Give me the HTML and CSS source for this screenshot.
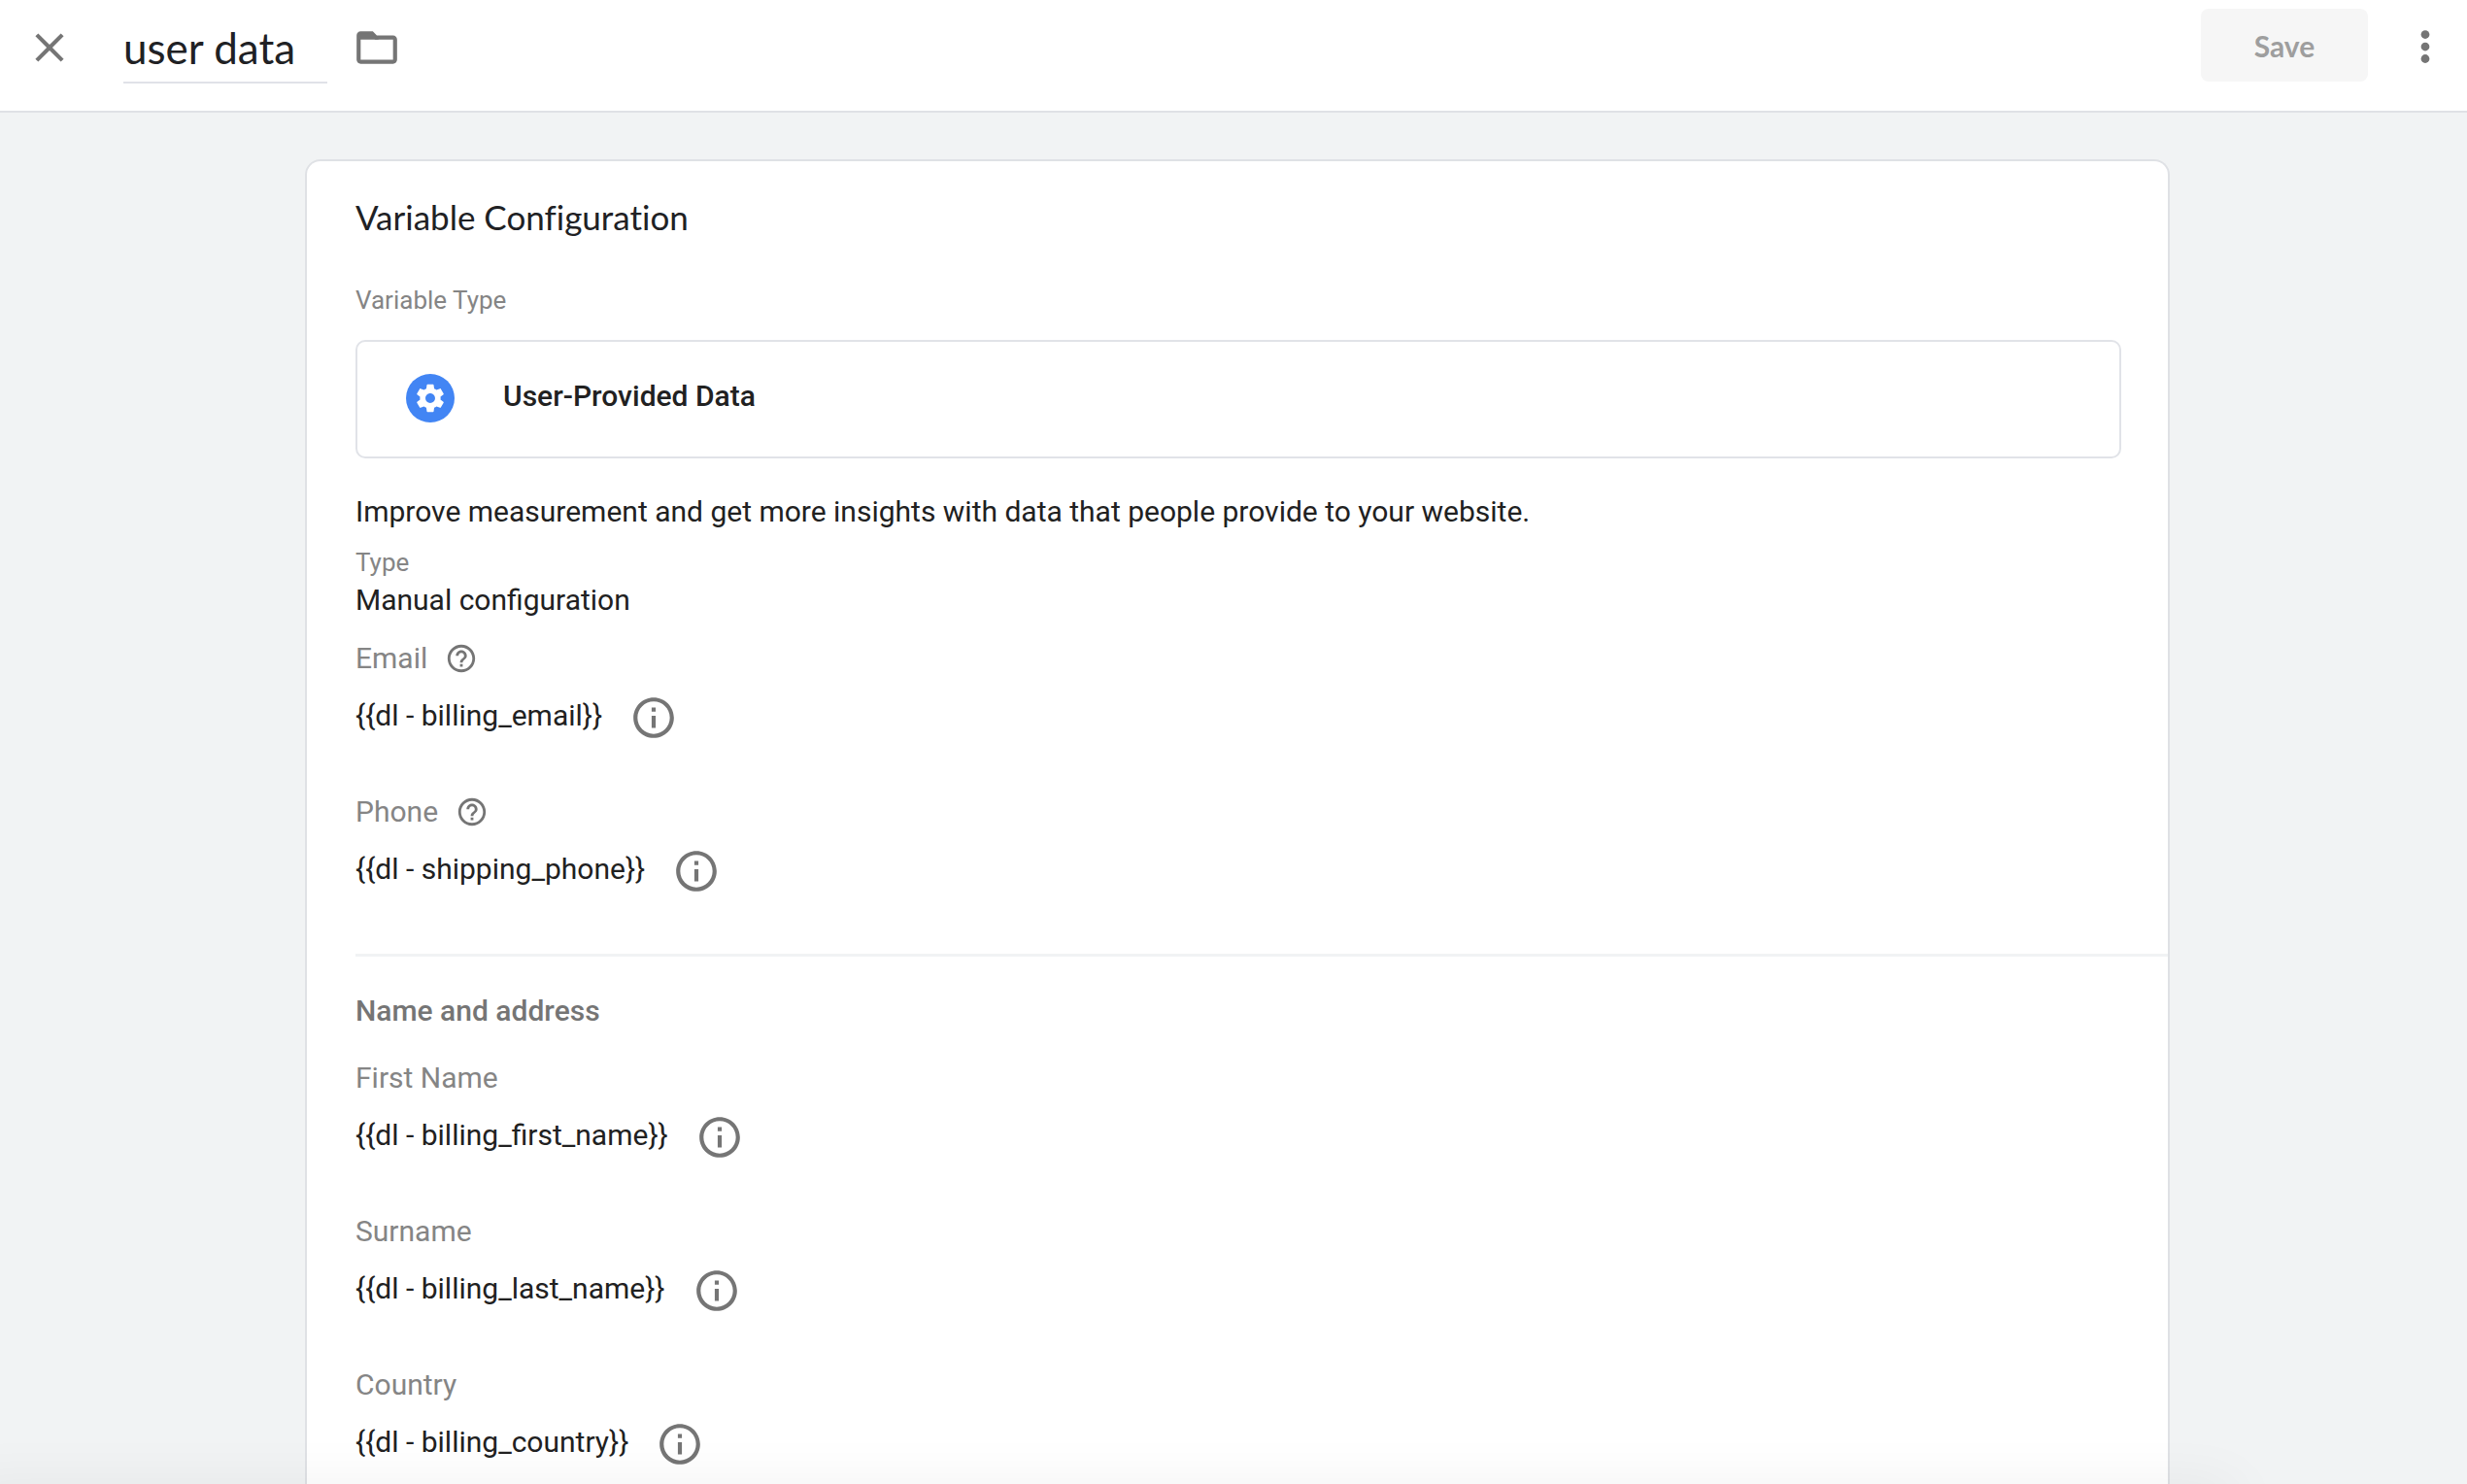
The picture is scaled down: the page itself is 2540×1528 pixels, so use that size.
FILE: index.html
```html
<!DOCTYPE html>
<html lang="en">
<head>
<meta charset="utf-8">
<meta name="viewport" content="width=device-width, initial-scale=1">
<title>user data</title>
<link rel="stylesheet" href="styles.css">
</head>
<body>
<svg class="sprite" aria-hidden="true">
  <symbol id="icon-info" viewBox="0 0 24 24"><path d="M11 7h2v2h-2V7zm0 4h2v6h-2v-6zm1-9C6.48 2 2 6.48 2 12s4.48 10 10 10 10-4.48 10-10S17.52 2 12 2zm0 18c-4.410 0-8-3.590-8-8s3.590-8 8-8 8 3.590 8 8-3.590 8-8 8z"/></symbol>
  <symbol id="icon-help" viewBox="0 0 24 24"><path d="M11 18h2v-2h-2v2zm1-16C6.480 2 2 6.480 2 12s4.480 10 10 10 10-4.480 10-10S17.520 2 12 2zm0 18c-4.410 0-8-3.590-8-8s3.590-8 8-8 8 3.590 8 8-3.590 8-8 8zm0-14c-2.210 0-4 1.790-4 4h2c0-1.100.9-2 2-2s2 .9 2 2c0 2-3 1.750-3 5h2c0-2.250 3-2.500 3-5 0-2.210-1.790-4-4-4z"/></symbol>
</svg>
<header class="topbar">
  <button class="icon-button" type="button" aria-label="Close">
    <svg class="icon" viewBox="0 0 24 24"><path d="M19 6.410 17.590 5 12 10.590 6.410 5 5 6.410 10.590 12 5 17.590 6.410 19 12 13.410 17.590 19 19 17.590 13.410 12z"/></svg>
  </button>
  <input class="title-input" type="text" value="user data" aria-label="Variable name">
  <button class="icon-button" type="button" aria-label="Move to folder">
    <svg class="icon" viewBox="0 0 24 24"><path d="M9.170 6l2 2H20v10H4V6h5.170M10 4H4c-1.100 0-1.990.9-1.990 2L2 18c0 1.100.9 2 2 2h16c1.100 0 2-.9 2-2V8c0-1.100-.9-2-2-2h-8l-2-2z"/><path d="M3 5h7l3 3H3z"/></svg>
  </button>
  <div class="topbar-actions">
    <button class="save-button" type="button" disabled>Save</button>
    <button class="icon-button" type="button" aria-label="More actions">
      <svg class="icon" viewBox="0 0 24 24"><circle cx="12" cy="6" r="2.100"/><circle cx="12" cy="12" r="2.100"/><circle cx="12" cy="18" r="2.100"/></svg>
    </button>
  </div>
</header>
<main class="page">
  <section class="card">
    <h1 class="card-title">Variable Configuration</h1>
    <h2 class="caption type-caption">Variable Type</h2>
    <div class="type-box">
      <span class="type-badge"><svg class="gear" viewBox="0 0 24 24"><path d="M19.430 12.980c.04-.32.07-.64.07-.98s-.03-.66-.07-.98l2.110-1.650c.19-.15.24-.42.12-.64l-2-3.460c-.12-.22-.39-.3-.61-.22l-2.490 1c-.52-.4-1.080-.73-1.690-.98l-.38-2.650C14.460 2.180 14.250 2 14 2h-4c-.25 0-.46.18-.49.42l-.38 2.650c-.61.25-1.170.59-1.690.98l-2.490-1c-.23-.09-.49 0-.61.22l-2 3.460c-.13.22-.07.49.12.64l2.110 1.650c-.04.32-.07.65-.07.98s.03.66.07.98l-2.110 1.650c-.19.15-.24.42-.12.64l2 3.460c.12.22.39.3.61.22l2.490-1c.52.4 1.080.73 1.690.98l.38 2.650c.03.24.24.42.49.42h4c.25 0 .46-.18.49-.42l.38-2.650c.61-.25 1.170-.59 1.690-.98l2.490 1c.23.09.49 0 .61-.22l2-3.460c.12-.22.07-.49-.12-.64l-2.110-1.650zM12 15.500c-1.930 0-3.500-1.570-3.500-3.500s1.570-3.500 3.500-3.500 3.500 1.570 3.500 3.500-1.570 3.500-3.500 3.500z"/></svg></span>
      <span class="type-name">User-Provided Data</span>
    </div>
    <p class="description">Improve measurement and get more insights with data that people provide to your website.</p>
    <h3 class="caption kind-caption">Type</h3>
    <p class="kind-value">Manual configuration</p>
    <dl class="fields contact">
      <dt class="label">Email <button class="help" type="button" aria-label="About email"><svg><use href="#icon-help"/></svg></button></dt>
      <dd class="value"><span>{{dl - billing_email}}</span><button class="info" type="button" aria-label="Variable details"><svg><use href="#icon-info"/></svg></button></dd>
      <dt class="label">Phone <button class="help" type="button" aria-label="About phone"><svg><use href="#icon-help"/></svg></button></dt>
      <dd class="value"><span>{{dl - shipping_phone}}</span><button class="info" type="button" aria-label="Variable details"><svg><use href="#icon-info"/></svg></button></dd>
    </dl>
    <hr class="divider">
    <h2 class="group-title">Name and address</h2>
    <dl class="fields address">
      <dt class="label">First Name</dt>
      <dd class="value"><span>{{dl - billing_first_name}}</span><button class="info" type="button" aria-label="Variable details"><svg><use href="#icon-info"/></svg></button></dd>
      <dt class="label">Surname</dt>
      <dd class="value"><span>{{dl - billing_last_name}}</span><button class="info" type="button" aria-label="Variable details"><svg><use href="#icon-info"/></svg></button></dd>
      <dt class="label">Country</dt>
      <dd class="value"><span>{{dl - billing_country}}</span><button class="info" type="button" aria-label="Variable details"><svg><use href="#icon-info"/></svg></button></dd>
    </dl>
  </section>
</main>
<div class="bottom-shade"></div>
</body>
</html>
```
FILE: styles.css
```css
* { box-sizing: border-box; }

body {
  margin: 0;
  min-height: 100vh;
  display: flex;
  flex-direction: column;
  background: #f1f3f4;
  color: #212121;
  font-family: Roboto, "Liberation Sans", sans-serif;
  font-size: 30px;
  line-height: 40px;
}

h1, h2, h3, p, dl, dd { margin: 0; }
h1, h2, h3 { font-weight: 400; }

button {
  padding: 0;
  border: 0;
  background: none;
  color: inherit;
  font: inherit;
}

svg { display: block; fill: #757575; }
.sprite { position: absolute; width: 0; height: 0; }

.topbar {
  display: flex;
  align-items: flex-start;
  height: 116px;
  padding: 9px 18px 0 26px;
  border-bottom: 2px solid #dfe1e5;
  background: #fff;
}

.icon-button { flex: none; }
.icon { width: 50px; height: 50px; margin: 15px 0; }

.title-input {
  width: 210px;
  height: 77px;
  margin: 0 26px 0 51px;
  padding: 4px 0 0;
  border: 0;
  border-bottom: 2px solid #e0e2e8;
  border-radius: 0;
  background: none;
  color: #202124;
  font-family: "Google Sans", Lato, sans-serif;
  font-size: 44px;
}

.topbar-actions { display: flex; align-items: flex-start; gap: 34px; margin-left: auto; }
.topbar-actions .icon { margin: 14px 0; }

.save-button {
  width: 172px;
  height: 75px;
  border-radius: 8px;
  background: #f6f6f6;
  color: #9e9e9e;
  font-family: "Google Sans", Lato, sans-serif;
  font-size: 30px;
  font-weight: 700;
}

.page {
  flex: 1;
  display: flex;
  justify-content: center;
  padding: 48px 24px 0 32px;
}

.card {
  flex: 0 1 1920px;
  padding: 35px 0 24px 50px;
  border: 2px solid #dfe1e5;
  border-bottom: 0;
  border-radius: 16px 16px 0 0;
  background: #fff;
}

.card-title {
  color: #202124;
  font-family: "Google Sans", Lato, sans-serif;
  font-size: 35px;
  font-variant-ligatures: none;
  line-height: 44px;
}

.caption { color: #858585; font-size: 26px; line-height: 30px; }
.type-caption { margin-top: 49px; }

.type-box {
  display: flex;
  align-items: flex-start;
  gap: 50px;
  margin: 26px 48px 0 0;
  padding: 33px 50px 35px;
  border: 2px solid #e1e3e8;
  border-radius: 10px;
}

.type-badge {
  display: grid;
  place-items: center;
  width: 50px;
  height: 50px;
  border-radius: 50%;
  background: #4285f4;
}
.gear { width: 34px; height: 34px; fill: #fff; }
.type-name { font-weight: 500; line-height: 46px; }

.description { margin-top: 35px; }
.kind-caption { margin-top: 17px; }
.kind-value { margin-top: 4px; }

.contact { margin-top: 20px; }
.address { margin-top: 29px; }

.label { display: flex; align-items: center; gap: 18px; color: #858585; }
.help svg { width: 34px; height: 34px; }
.value {
  display: flex;
  align-items: flex-start;
  gap: 28px;
  height: 46px;
  margin-top: 18px;
  line-height: 42px;
}
.value + .label { margin-top: 54px; }
.info { display: flex; align-items: center; height: 46px; }
.info svg { width: 50px; height: 50px; }

.divider {
  height: 3px;
  margin: 62px 0 0;
  border: 0;
  background: #f1f3f4;
}

.group-title {
  margin-top: 36px;
  color: #757575;
  font-size: 30px;
  font-weight: 500;
}

.bottom-shade {
  position: fixed;
  right: 240px;
  bottom: -20px;
  left: -40px;
  height: 20px;
  box-shadow: 0 10px 60px rgba(0, 0, 0, 0.12);
  pointer-events: none;
}
```
